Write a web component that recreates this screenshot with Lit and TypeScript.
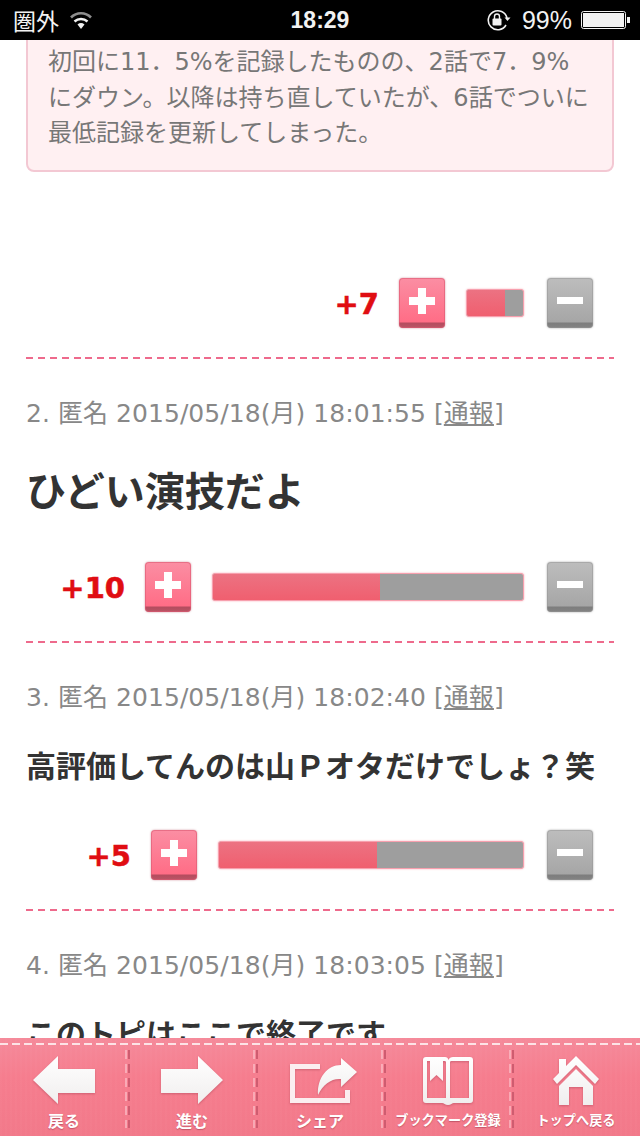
import { LitElement, html, css, svg } from "lit";
import { customElement } from "lit/decorators.js";

const comments = [
  { no: 2, time: "2015/05/18(月) 18:01:55", text: "ひどい演技だよ", big: true, score: 10, bar: 312, fill: 54 },
  { no: 3, time: "2015/05/18(月) 18:02:40", text: "高評価してんのは山Ｐオタだけでしょ？笑", big: false, score: 5, bar: 306, fill: 52 },
];

const tabs = [
  { label: "戻る", small: false, shift: 0, icon: svg`<path d="M0 24 L25 0 V13 H62 V37 H25 V48 Z" fill="url(#ic)"/>`, w: 62 },
  { label: "進む", small: false, shift: 0, icon: svg`<path d="M62 24 L37 0 V13 H0 V37 H37 V48 Z" fill="url(#ic)"/>`, w: 62 },
  {
    label: "シェア",
    small: false,
    shift: 7,
    icon: svg`<path d="M0 8 H30 V13 H5 V42 H55 V34 H60 V47 H0 Z" fill="#fbeef0"/><path d="M51 2 L67 16 L51 31 V23 C42 22 33 28 28 39 C27 22 37 9 51 9 Z" fill="url(#ic)"/>`,
    w: 67,
  },
  {
    label: "ブックマーク登録",
    small: true,
    shift: 0,
    icon: svg`<path fill-rule="evenodd" d="M3 1 H22 C24 1 25 2 25.5 4 C26 2 28 1 30 1 H47 C49 1 50 2 50 4 V44 C50 46 49 47 47 47 H31 C29 47 28 49 25 49 C22 49 21 47 19 47 H3 C1 47 0 46 0 44 V4 C0 2 1 1 3 1 Z M4 5 V42 H23 V6 C23 5 22 5 21 5 H20 V25 L13.5 19 L7 25 V5 Z M27 6 V42 H46 V5 H29 C28 5 27 5 27 6 Z" fill="url(#ic)"/>`,
    w: 50,
  },
  {
    label: "トップへ戻る",
    small: true,
    shift: 0,
    icon: svg`<path fill-rule="evenodd" d="M24 0 L47 23 L43 28 L24 9 L5 28 L1 23 L7 17 V3 H14 V10 Z M24 13 L41 30 V49 H31 V31 H17 V49 H7 V30 Z" fill="url(#ic)"/>`,
    w: 48,
  },
];

@customElement("vote-row")
export class VoteRow extends LitElement {
  static properties = {
    score: { type: Number },
    bar: { type: Number },
    fill: { type: Number },
  };
  declare score: number;
  declare bar: number;
  declare fill: number;

  static styles = css`
    :host {
      display: flex;
      justify-content: flex-end;
      align-items: center;
      padding-right: 47px;
      height: 50px;
    }
    .score {
      font: bold 29px "DejaVu Sans", sans-serif;
      -webkit-text-stroke: 0.5px #e00d12;
      color: #e00d12;
      margin-right: 20px;
      margin-top: 2px;
    }
    .btn {
      width: 46px;
      height: 50px;
      box-sizing: border-box;
      border-radius: 4px;
      display: flex;
      align-items: center;
      justify-content: center;
      padding-bottom: 5px;
    }
    .plus {
      background: linear-gradient(#fb8ea3, #ff6d86 88%, #b44c5e 90%, #bb5566);
      box-shadow: 0 0 2px rgba(170, 60, 80, 0.6), inset 0 0 0 1px rgba(220, 90, 115, 0.6);
    }
    .minus {
      background: linear-gradient(#bdbdbd, #a6a6a6 88%, #7d7d7d 90%, #838383);
      box-shadow: 0 0 2px rgba(90, 90, 90, 0.6), inset 0 0 0 1px rgba(150, 150, 150, 0.5);
    }
    .bar {
      height: 28px;
      box-sizing: border-box;
      margin: 0 23px 0 21px;
      border: 1px solid #f7a0ae;
      box-shadow: 0 0 2px #f9a5b2;
      border-radius: 3px;
      background: #9e9e9e;
      overflow: hidden;
    }
    .fill {
      height: 100%;
      background: linear-gradient(#ec7282, #f05f6f);
    }
  `;

  render() {
    return html`
      <span class="score">+${this.score}</span>
      <div class="btn plus">
        <svg width="26" height="26" viewBox="0 0 26 26"><path d="M9 0 H17 V9 H26 V17 H17 V26 H9 V17 H0 V9 H9 Z" fill="#fff" /></svg>
      </div>
      <div class="bar" style="width:${this.bar}px"><div class="fill" style="width:${this.fill}%"></div></div>
      <div class="btn minus">
        <svg width="26" height="7" viewBox="0 0 26 7"><rect width="26" height="7" fill="#fff" /></svg>
      </div>
    `;
  }
}

@customElement("app-root")
export class AppRoot extends LitElement {
  static styles = css`
    :host {
      display: block;
      position: relative;
      width: 640px;
      height: 1136px;
      overflow: hidden;
      background: #fff;
      font-family: "DejaVu Sans", "Noto Sans CJK JP", sans-serif;
    }
    .status {
      height: 40px;
      background: #000;
      color: #f2f2f2;
      display: flex;
      align-items: center;
      padding: 0 10px 0 13px;
      font-family: "Liberation Sans", sans-serif;
      font-size: 25px;
      position: relative;
    }
    .carrier {
      font-family: "Noto Sans CJK JP", sans-serif;
      font-size: 23px;
      margin-right: 11px;
    }
    .clock {
      position: absolute;
      left: 0;
      right: 0;
      text-align: center;
      font-size: 23px;
      font-weight: bold;
    }
    .right {
      margin-left: auto;
      display: flex;
      align-items: center;
    }
    .pct {
      margin: 0 9px 0 11px;
    }
    .notice {
      margin: -8px 26px 0;
      padding: 11px 20px 18.5px;
      background: #fff0f2;
      border: 2px solid #f3c8d3;
      border-radius: 8px;
      color: #777;
      font-size: 24px;
      line-height: 35.5px;
    }
    .rule {
      margin: 29px 26px 0;
      height: 2px;
      background: repeating-linear-gradient(90deg, #ee6a8c 0 7px, transparent 7px 11.9px);
    }
    .meta {
      margin: 40px 26px 0;
      color: #888;
      font-size: 25px;
      letter-spacing: 0.05px;
      line-height: 30px;
      white-space: nowrap;
    }
    .meta u {
      text-underline-offset: 2px;
    }
    .text {
      margin: 0 26px;
      color: #333;
      font-weight: bold;
      white-space: nowrap;
    }
    .text.big {
      font-size: 40px;
      line-height: 60px;
      margin-top: 33px;
      margin-bottom: 40px;
    }
    .text.normal {
      font-size: 30px;
      line-height: 44px;
      margin-top: 32px;
      margin-bottom: 41px;
    }
    .toolbar {
      position: absolute;
      left: 0;
      right: 0;
      bottom: 0;
      height: 98px;
      display: grid;
      grid-template-columns: repeat(5, 1fr);
      background: repeating-linear-gradient(90deg, rgba(255, 255, 255, 0.02) 0 2px, transparent 2px 5px),
        linear-gradient(#f58a9a, #f67d8e 40%, #f2798a);
    }
    .toolbar::before {
      content: "";
      position: absolute;
      left: 0;
      right: 0;
      top: 5px;
      height: 2px;
      background: repeating-linear-gradient(90deg, #fde3e6 0 8px, transparent 8px 12px);
    }
    .tab {
      position: relative;
      display: flex;
      flex-direction: column;
      align-items: center;
      justify-content: flex-end;
      padding-bottom: 5px;
      box-sizing: border-box;
      margin-top: 18px;
      color: #fff;
    }
    .tab + .tab::before {
      content: "";
      position: absolute;
      left: -3px;
      top: -6px;
      bottom: 8px;
      width: 5px;
      background: repeating-linear-gradient(180deg, rgba(255, 225, 230, 0.45) 0 9px, transparent 9px 14px) left top / 2px 100% no-repeat,
        repeating-linear-gradient(180deg, #cf5c70 0 9px, transparent 9px 14px) right top / 2px 100% no-repeat;
    }
    .tab svg {
      margin-bottom: auto;
      filter: drop-shadow(0 1px 1px rgba(150, 50, 70, 0.4));
    }
    .label {
      font-family: "Noto Sans CJK JP", sans-serif;
      font-size: 16px;
      font-weight: bold;
      line-height: 22px;
      white-space: nowrap;
      text-shadow: 0 1px 1px rgba(150, 50, 70, 0.5);
    }
    .label.small {
      font-size: 13.2px;
    }
  `;

  render() {
    return html`
      <div class="status">
        <span class="carrier">圏外</span>
        <svg width="22" height="18" viewBox="0 0 22 18">
          <path d="M11 18 L7.5 13.5 A5.5 5.5 0 0 1 14.5 13.5 Z" fill="#f2f2f2" />
          <path d="M4.5 10.5 A9.5 9.5 0 0 1 17.5 10.5" stroke="#f2f2f2" stroke-width="2.4" fill="none" />
          <path d="M1 6.5 A14 14 0 0 1 21 6.5" stroke="#8e8e8e" stroke-width="2.6" fill="none" />
        </svg>
        <span class="clock">18:29</span>
        <div class="right">
          <svg width="24" height="22" viewBox="0 0 24 22">
            <path d="M19 16 A9.5 9.5 0 1 1 20 9" stroke="#f2f2f2" stroke-width="1.6" fill="none" />
            <path d="M17.5 8.5 H23.5 L20.5 12 Z" fill="#f2f2f2" />
            <rect x="5.5" y="9.5" width="9" height="7" rx="1" fill="#f2f2f2" />
            <path d="M7.5 10 V7.5 A2.5 2.5 0 0 1 12.5 7.5 V10" stroke="#f2f2f2" stroke-width="1.4" fill="none" />
          </svg>
          <span class="pct">99%</span>
          <svg width="49" height="18" viewBox="0 0 49 18">
            <rect x="0.5" y="0.5" width="44" height="17" rx="2" stroke="#f2f2f2" fill="none" />
            <rect x="2" y="2" width="41" height="14" fill="#f2f2f2" />
            <rect x="46" y="6" width="3" height="6" fill="#f2f2f2" />
          </svg>
        </div>
      </div>

      <div class="notice">初回に11．5%を記録したものの、2話で7．9%にダウン。以降は持ち直していたが、6話でついに最低記録を更新してしまった。</div>

      <vote-row style="margin-top:106px" score="7" bar="58" fill="67"></vote-row>
      <div class="rule"></div>

      ${comments.map(
        (c) => html`
          <div class="meta">${c.no}. 匿名 ${c.time} [<u>通報</u>]</div>
          <div class="text ${c.big ? "big" : "normal"}">${c.text}</div>
          <vote-row score=${c.score} bar=${c.bar} fill=${c.fill}></vote-row>
          <div class="rule"></div>
        `
      )}

      <div class="meta">4. 匿名 2015/05/18(月) 18:03:05 [<u>通報</u>]</div>
      <div class="text normal">このトピはここで終了です。</div>

      <div class="toolbar">
        <svg width="0" height="0" style="position:absolute">
          <defs>
            <linearGradient id="ic" x1="0" y1="0" x2="0" y2="1">
              <stop offset="0" stop-color="#fff" />
              <stop offset="1" stop-color="#f0eeee" />
            </linearGradient>
          </defs>
        </svg>
        ${tabs.map(
          (t) => html`
            <div class="tab">
              <svg style="margin-left:${t.shift}px" width=${t.w} height="50" viewBox="0 0 ${t.w} 50">${t.icon}</svg>
              <span class="label ${t.small ? "small" : ""}">${t.label}</span>
            </div>
          `
        )}
      </div>
    `;
  }
}
